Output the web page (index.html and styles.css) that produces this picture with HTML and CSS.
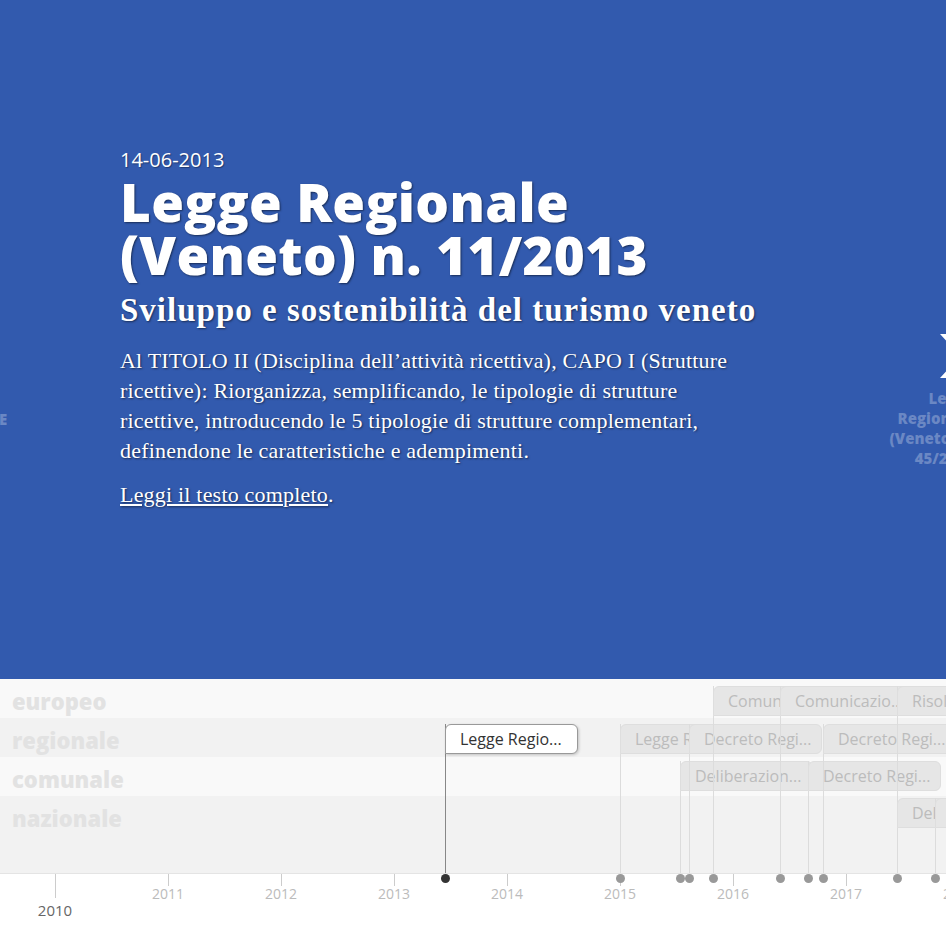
FILE: index.html
```html
<!DOCTYPE html>
<html lang="it">
<head>
<meta charset="utf-8">
<title>Timeline</title>
<link rel="stylesheet" href="styles.css">
</head>
<body>
<div class="timeline">
  <section class="slider">
    <div class="slide">
      <div class="date">14-06-2013</div>
      <h1 class="title">Legge Regionale<br>(Veneto) n. 11/2013</h1>
      <h2 class="subtitle">Sviluppo e sostenibilità del turismo veneto</h2>
      <p class="text">Al TITOLO II (Disciplina dell’attività ricettiva), CAPO I (Strutture<br>ricettive): Riorganizza, semplificando, le tipologie di strutture<br>ricettive, introducendo le 5 tipologie di strutture complementari,<br>definendone le caratteristiche e adempimenti.</p>
      <p class="text link-line"><a href="#" class="link">Leggi il testo completo</a>.</p>
    </div>
    <div class="nav-prev">E</div>
    <div class="nav-next">
      <svg class="chev" width="30" height="44" viewBox="0 0 30 44"><path d="M0 0 L10 0 L30 22 L10 44 L0 44 L20 22 Z" fill="#fff"/></svg>
      <div class="nav-title">Legge<br>Regionale<br>(Veneto) n.<br>45/2017</div>
    </div>
  </section>
  <section class="timenav">
    <div class="bands">
      <div class="band light"><span class="band-label">europeo</span></div>
      <div class="band dark"><span class="band-label">regionale</span></div>
      <div class="band light"><span class="band-label">comunale</span></div>
      <div class="band dark tall"><span class="band-label">nazionale</span></div>
    </div>
    <div class="axis">
      <div class="tick major" style="left:55px"><span>2010</span></div>
      <div class="tick" style="left:168px"><span>2011</span></div>
      <div class="tick" style="left:281px"><span>2012</span></div>
      <div class="tick" style="left:394px"><span>2013</span></div>
      <div class="tick" style="left:507px"><span>2014</span></div>
      <div class="tick" style="left:620px"><span>2015</span></div>
      <div class="tick" style="left:733px"><span>2016</span></div>
      <div class="tick" style="left:846px"><span>2017</span></div>
      <div class="tick" style="left:959px"><span>2018</span></div>
    </div>

    <div class="marker row2 active" style="left:445px"><div class="flag">Legge Regio...</div></div>

    <div class="marker row2" style="left:620px"><div class="flag">Legge Regio...</div></div>
    <div class="marker row3" style="left:680px"><div class="flag">Deliberazion...</div></div>
    <div class="marker row2" style="left:689px"><div class="flag">Decreto Regi...</div></div>
    <div class="marker row1" style="left:713px"><div class="flag">Comunicazio...</div></div>
    <div class="marker row1" style="left:780px"><div class="flag">Comunicazio..</div></div>
    <div class="marker row3" style="left:808px"><div class="flag">Decreto Regi...</div></div>
    <div class="marker row2" style="left:823px"><div class="flag">Decreto Regi...</div></div>
    <div class="marker row1" style="left:897px"><div class="flag">Risoluzione...</div></div>
    <div class="marker row4" style="left:897px"><div class="flag">Deliberazion...</div></div>
    <div class="marker row4" style="left:935px"><div class="flag">Decreto Regi...</div></div>

    <span class="dot active" style="left:445px"></span>
    <span class="dot" style="left:620px"></span>
    <span class="dot" style="left:680px"></span>
    <span class="dot" style="left:689px"></span>
    <span class="dot" style="left:713px"></span>
    <span class="dot" style="left:780px"></span>
    <span class="dot" style="left:808px"></span>
    <span class="dot" style="left:823px"></span>
    <span class="dot" style="left:897px"></span>
    <span class="dot" style="left:935px"></span>
  </section>
</div>
</body>
</html>
```
FILE: styles.css
```css
* { box-sizing: border-box; }
html, body { margin: 0; padding: 0; }
body {
  width: 946px;
  height: 946px;
  overflow: hidden;
  background: #fff;
  font-family: "Open Sans", "Liberation Sans", sans-serif;
}
.timeline { width: 946px; height: 946px; overflow: hidden; }

.slider {
  position: relative;
  height: 679px;
  background: #325aae;
  overflow: hidden;
}
.slide {
  padding: 147px 0 0 120px;
  color: #fff;
}
.date {
  font-size: 20px;
  line-height: 26px;
  text-shadow: 1px 1px 1px rgba(0,0,0,.35);
}
.title {
  margin: 2px 0 0;
  font-weight: 800;
  font-size: 53px;
  letter-spacing: 0.3px;
  line-height: 53px;
  text-shadow: 1px 1px 2px rgba(0,0,0,.5);
}
.subtitle {
  margin: 9px 0 0;
  font-family: "Liberation Serif", "DejaVu Serif", serif;
  font-weight: 700;
  font-size: 33px;
  letter-spacing: 1px;
  line-height: 40px;
  text-shadow: 1px 1px 2px rgba(0,0,0,.5);
}
.text {
  margin: 16px 0 0;
  font-family: "Liberation Serif", "DejaVu Serif", serif;
  font-size: 22px;
  letter-spacing: 0.2px;
  line-height: 30px;
  text-shadow: 1px 1px 2px rgba(0,0,0,.5);
}
.link-line { margin-top: 14px; }
.link { color: #fff; text-decoration: underline; }

.nav-prev {
  position: absolute;
  left: -1px;
  top: 409px;
  font-weight: 800;
  font-size: 15px;
  color: rgba(255,255,255,.28);
}
.nav-next {
  position: absolute;
  left: 860px;
  top: 334px;
  width: 114px;
  text-align: right;
}
.chev { display: block; margin-left: 80px; }
.nav-title {
  margin-top: 10px;
  font-weight: 800;
  font-size: 15px;
  line-height: 20px;
  color: rgba(255,255,255,.28);
}

.timenav {
  position: relative;
  height: 267px;
  background: #fff;
  overflow: hidden;
}
.bands { display: flex; flex-direction: column; }
.band { height: 39px; padding-left: 12px; }
.band.tall { height: 77px; }
.band.light { background: #f9f9f9; }
.band.dark { background: #f2f2f2; }
.band-label {
  display: block;
  font-weight: 800;
  font-size: 22px;
  line-height: 30px;
  padding-top: 7px;
  color: #e2e2e2;
}
.axis {
  position: relative;
  height: 73px;
  border-top: 1px solid #e4e4e4;
}
.tick {
  position: absolute;
  top: 0;
  width: 1px;
  height: 12px;
  background: #ccc;
}
.tick span {
  position: absolute;
  top: 10px;
  left: -30px;
  width: 60px;
  text-align: center;
  font-size: 14px;
  color: #bbb;
}
.tick.major { height: 24px; }
.tick.major span {
  top: 26px;
  font-size: 15px;
  color: #666;
}

.marker {
  position: absolute;
  bottom: 73px;
  width: 133px;
  border-left: 1px solid #dcdcdc;
}
.marker.row1 { top: 7px; }
.marker.row2 { top: 45px; }
.marker.row3 { top: 82px; }
.marker.row4 { top: 119px; }
.flag {
  margin-left: -1px;
  width: 133px;
  height: 30px;
  padding: 0 6px 0 14px;
  background: #e6e6e6;
  border: 1px solid #dedede;
  border-radius: 6px 6px 6px 0;
  font-size: 16px;
  line-height: 28px;
  color: #bcbcbc;
  white-space: nowrap;
  overflow: hidden;
}
.marker.active { border-left-color: #888; z-index: 2; }
.marker.active .flag {
  background: #fff;
  border-color: #999;
  color: #333;
  box-shadow: 1px 1px 3px rgba(0,0,0,.2);
}
.dot {
  position: absolute;
  top: 195px;
  width: 9px;
  height: 9px;
  margin-left: -4px;
  border-radius: 50%;
  background: #999;
}
.dot.active { background: #333; }
```
